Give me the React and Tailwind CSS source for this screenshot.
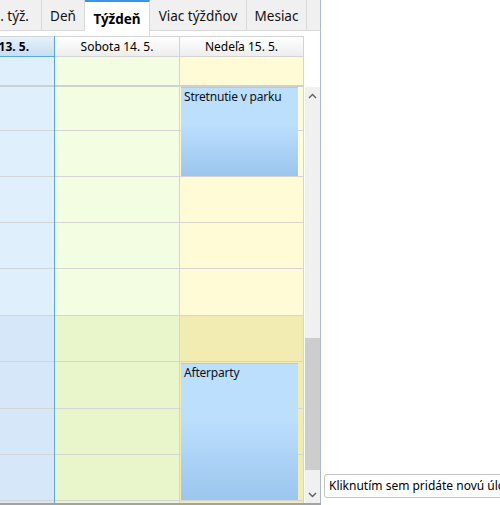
import React from 'react'

const ROW_H = ['h-[44px]', 'h-[46px]', 'h-[46px]', 'h-[46px]', 'h-[47px]', 'h-[46px]', 'h-[47px]', 'h-[46px]', 'h-[46px]']

const Tab = ({ label, width, active, alignEnd }) => {
  if (active) {
    return (
      <div className={`${width} h-[36px] shrink-0 flex items-start justify-center border-r border-[#d9d9d9] bg-white border-t-2 border-t-[#3d95e8]`}>
        <span className="mt-[7px] text-[13.5px] font-bold text-black">{label}</span>
      </div>
    )
  }
  return (
    <div className={`${width} h-[31px] shrink-0 flex items-center overflow-hidden whitespace-nowrap border-r border-b border-[#d9d9d9] bg-[#f0f0f0] ${alignEnd ? 'justify-end pr-[12px]' : 'justify-center'}`}>
      <span className="pt-[2px] text-[13.5px] text-[#111]">{label}</span>
    </div>
  )
}

const EventBlock = ({ title, pos }) => (
  <div className={`absolute left-[1px] w-[117px] ${pos} bg-gradient-to-b from-[#bcdffe] from-40% to-[#9bc6ee] border-t border-[#a8cdf0] px-[3px] pt-[2px]`}>
    <div className="text-[12px] leading-[14px] tracking-[-0.2px] text-[#111]">{title}</div>
  </div>
)

const DayColumn = ({ width, header, today, light, dark, border, children }) => (
  <div className={`${width} shrink-0 flex flex-col border-r ${border}`}>
    <div
      className={`h-[21px] border-y flex items-center overflow-hidden whitespace-nowrap ${
        today
          ? 'bg-gradient-to-b from-[#e6f2fd] to-[#c7ddf1] border-t-[#d4d4d4] border-b-[#5aa8e6] justify-end pr-[25px] font-bold'
          : 'bg-gradient-to-b from-white to-[#ededed] border-[#d4d4d4] justify-center'
      }`}
    >
      <span className="text-[12px] text-black">{header}</span>
    </div>
    <div className={`h-[28px] ${light}`} />
    <div className="h-[2px] bg-[#d0d0d0]" />
    <div className="relative">
      {ROW_H.map((h, i) => (
        <div key={i} className={`${h} border-b border-[#d4d4d4] ${i >= 5 ? dark : light}`} />
      ))}
      {children}
    </div>
    <div className={`h-[2px] ${dark}`} />
  </div>
)

const Chevron = ({ up }) => (
  <svg width="9" height="6" viewBox="0 0 9 6" className="text-[#606060]">
    <polyline
      points={up ? '1,5 4.5,1.5 8,5' : '1,1 4.5,4.5 8,1'}
      fill="none"
      stroke="currentColor"
      strokeWidth="1.4"
    />
  </svg>
)

export default function App() {
  return (
    <div className="w-[500px] h-[505px] bg-white relative overflow-hidden font-['Noto_Sans',sans-serif]">
      <div className="w-[321px] flex flex-col">
        {/* tabs */}
        <div className="flex h-[31px] items-start">
          <Tab label="Prac. týž." width="w-[42px]" alignEnd />
          <Tab label="Deň" width="w-[43px]" />
          <Tab label="Týždeň" width="w-[65px]" active />
          <Tab label="Viac týždňov" width="w-[97px]" />
          <Tab label="Mesiac" width="w-[60px]" />
          <div className="w-[14px] h-[31px] shrink-0 bg-[#f0f0f0] border-b border-[#d9d9d9] border-r border-r-[#aab8cc]" />
        </div>
        <div className="h-[5px] border-r border-[#aab8cc]" />

        {/* calendar body */}
        <div className="flex border-b-2 border-[#a3a3a3]">
          <DayColumn
            width="w-[55px]"
            header="Piatok 13. 5."
            today
            light="bg-[#e0effc]"
            dark="bg-[#d5e7f8]"
            border="border-r-[#5aa8e6]"
          />
          <DayColumn
            width="w-[125px]"
            header="Sobota 14. 5."
            light="bg-[#f3fde1]"
            dark="bg-[#e9f6cb]"
            border="border-r-[#d4d4d4]"
          />
          <DayColumn
            width="w-[124px]"
            header="Nedeľa 15. 5."
            light="bg-[#fffbd7]"
            dark="bg-[#f2ecb3]"
            border="border-r-[#d4d4d4]"
          >
            <EventBlock title="Stretnutie v parku" pos="top-0 h-[89px]" />
            <EventBlock title="Afterparty" pos="top-[276px] h-[137px]" />
          </DayColumn>

          {/* scrollbar */}
          <div className="w-[17px] shrink-0 flex flex-col pl-[1px] border-r border-[#aab8cc]">
            <div className="h-[51px] bg-white" />
            <div className="flex-1 flex flex-col bg-[#f0f0f0]">
              <div className="h-[17px] flex items-center justify-center">
                <Chevron up />
              </div>
              <div className="h-[234px]" />
              <div className="h-[132px] bg-[#cdcdcd]" />
              <div className="flex-1" />
              <div className="h-[17px] flex items-center justify-center">
                <Chevron />
              </div>
            </div>
          </div>
        </div>
      </div>

      {/* tooltip */}
      <div className="absolute left-[324px] top-[474px] h-[24px] w-[190px] bg-white border border-[#c4c4c4] rounded-[3px] flex items-center pl-[4px] whitespace-nowrap">
        <span className="text-[12px] text-black">Kliknutím sem pridáte novú úlohu</span>
      </div>
    </div>
  )
}
